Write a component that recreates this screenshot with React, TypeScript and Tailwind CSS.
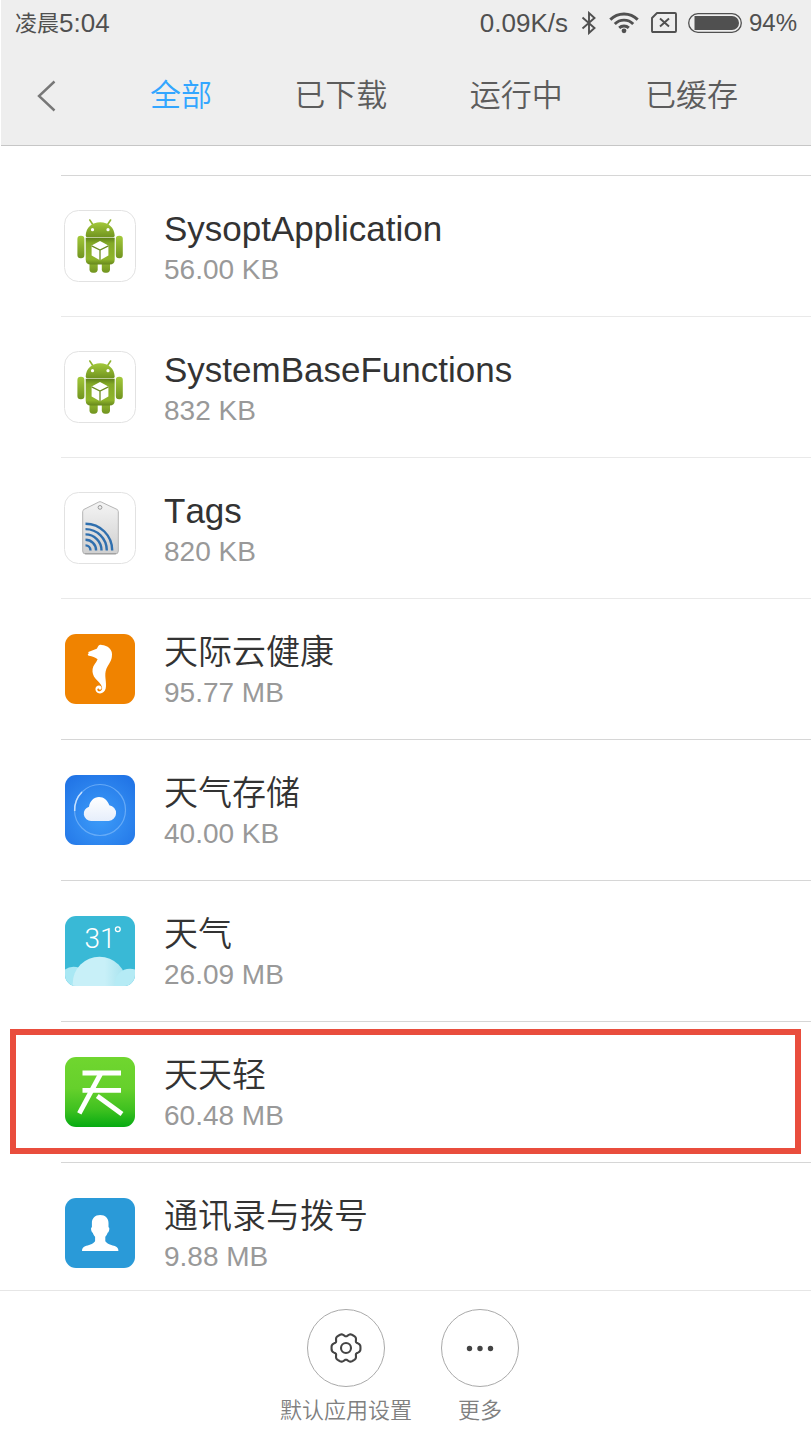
import type { ReactNode } from "react";

const LATIN_CJK = "font-['Liberation_Sans','Noto_Sans_CJK_SC',sans-serif]";

function AndroidIcon() {
  return (
    <svg viewBox="0 0 72 72" className="size-[72px] shrink-0" aria-hidden="true">
      <defs>
        <linearGradient id="droid" x1="0" y1="0" x2="0" y2="1">
          <stop offset="0" stopColor="#a3c93a" />
          <stop offset="1" stopColor="#71941f" />
        </linearGradient>
        <linearGradient id="droidBody" x1="0" y1="0" x2="0" y2="1">
          <stop offset="0" stopColor="#5f8119" />
          <stop offset="0.2" stopColor="#83a926" />
          <stop offset="0.8" stopColor="#8fb52b" />
          <stop offset="1" stopColor="#66871c" />
        </linearGradient>
      </defs>
      <rect x="0.5" y="0.5" width="71" height="71" rx="14" fill="#fff" stroke="#e2e2e2" />
      <path d="M25.8 10l2.8 4.2M46.6 10l-2.8 4.2" stroke="#8fb32e" strokeWidth="1.6" strokeLinecap="round" />
      <rect x="25.5" y="46" width="8.2" height="16.7" rx="3.4" fill="url(#droid)" />
      <rect x="37.800" y="46" width="8.2" height="16.7" rx="3.4" fill="url(#droid)" />
      <rect x="13.4" y="25.7" width="7" height="22.6" rx="3.3" fill="url(#droid)" />
      <rect x="51.800" y="25.7" width="7" height="22.6" rx="3.3" fill="url(#droid)" />
      <path d="M21.7 27.800h29v21.700q0 5-5 5h-19q-5 0-5-5z" fill="url(#droidBody)" />
      <path d="M21.7 25.5C22 17.5 28 12.2 36.2 12.2S50.4 17.5 50.7 25.5q0 1.7-1.6 1.7H23.3q-1.6 0-1.6-1.7z" fill="url(#droid)" />
      <circle cx="28.5" cy="19.7" r="1.6" fill="#fff" />
      <circle cx="44" cy="19.7" r="1.6" fill="#fff" />
      <path d="M36 31l8.4 4.6v10L36 50.2l-8.4-4.6v-10z" fill="#fff" />
      <path d="M27.6 35.8L36 40l8.4-4.2M36 40v10" fill="none" stroke="#6c8c22" strokeWidth="1.3" />
    </svg>
  );
}

function TagIcon() {
  return (
    <svg viewBox="0 0 72 72" className="size-[72px] shrink-0" aria-hidden="true">
      <defs>
        <linearGradient id="tag" x1="0" y1="0" x2="0" y2="1">
          <stop offset="0" stopColor="#f4f4f4" />
          <stop offset="1" stopColor="#cfcfcf" />
        </linearGradient>
      </defs>
      <rect x="0.5" y="0.5" width="71" height="71" rx="14" fill="#fff" stroke="#e2e2e2" />
      <path d="M20 17.4L34.8 10q1.2-.6 2.4 0L53 17.4q1.3.8 1.3 2.2V59q0 3-3 3H21.7q-3 0-3-3V19.6q0-1.4 1.3-2.2z" fill="url(#tag)" stroke="#b4b4b4" />
      <path d="M21 61.6h31" stroke="#a2a2a2" strokeWidth="1.2" />
      <circle cx="36" cy="15.4" r="1.9" fill="#eee" stroke="#999" />
      <g fill="none" stroke="#2f6fae" strokeWidth="2.4">
        <path d="M21.5 31.7A26.7 26.7 0 0 1 48.2 58.4" />
        <path d="M21.5 37.1A21.3 21.3 0 0 1 42.8 58.4" />
        <path d="M21.5 42.4A16 16 0 0 1 37.5 58.4" />
        <path d="M21.5 47.8A10.6 10.6 0 0 1 32.1 58.4" />
        <path d="M21.5 53.4A5 5 0 0 1 26.5 58.4" />
      </g>
    </svg>
  );
}

function SeahorseIcon() {
  return (
    <svg viewBox="0 0 72 72" className="size-[72px] shrink-0" aria-hidden="true">
      <rect x="1" y="1" width="70" height="70" rx="11" fill="#f08300" />
      <path
        d="M24.3 19l8.4-3.2c.9-1.2 1.2-2.6 2-3.4.7-.8 1.8-1 3-.5 5.9.4 10.700 4.400 10.300 9.700-.2 2.300 0 2.600-.6 4.400-.7 3-3.600 6.400-5 9.700-1.300 3.300-1.200 6.300-.9 9.700.4 3.800.8 7.200.2 10.200-.7 3.300-3.200 4.900-5.800 4.800-2.900-.1-4.600-2.300-4.500-4.500.1-2.400 2-3.700 3.700-3.500 1.700.2 2.700 1.500 2.500 2.800-.2 1.200-1.300 1.700-2.200 1.300-.7-.3-.8-.9-.6-1.300-1 .1-1.600.8-1.500 1.600.1 1.100 1.400 1.800 2.700 1.400 1.800-.5 2.500-2.300 2-4.200-.9-3.400-4.300-5.500-6.600-8.500-2.200-2.800-3.300-6-2.800-9.600.5-3.600 3.700-6.300 5-9.600-2.300-1.800-5.400-2.900-8.600-3.500-.9-.2-1.400-.9-1.100-1.500l.7-.6z"
        fill="#fff"
      />
    </svg>
  );
}

function CloudStorageIcon() {
  return (
    <svg viewBox="0 0 72 72" className="size-[72px] shrink-0" aria-hidden="true">
      <defs>
        <radialGradient id="sky" cx="0.5" cy="0.6" r="0.7">
          <stop offset="0" stopColor="#3d9cf9" />
          <stop offset="1" stopColor="#2174e6" />
        </radialGradient>
        <linearGradient id="puff" x1="0" y1="0" x2="0" y2="1">
          <stop offset="0" stopColor="#fff" />
          <stop offset="1" stopColor="#e6eefb" />
        </linearGradient>
      </defs>
      <rect x="1" y="1" width="70" height="70" rx="11" fill="url(#sky)" />
      <circle cx="36" cy="36" r="25.5" fill="none" stroke="#7ab7fa" strokeOpacity="0.75" strokeWidth="1.2" />
      <path d="M10.7 37A25.5 25.5 0 0 1 18 18" fill="none" stroke="#c6e0fd" strokeWidth="1.5" />
      <path d="M27.3 47a7.3 7.300 0 0 1-2.300-14.300C25.800 27 30 23 35 23c4.800 0 8.700 3.300 10.300 8.300A7.900 7.900 0 0 1 44.700 47z" fill="url(#puff)" />
    </svg>
  );
}

function WeatherIcon() {
  return (
    <svg viewBox="0 0 72 72" className="size-[72px] shrink-0" aria-hidden="true">
      <defs>
        <clipPath id="tile">
          <rect x="1" y="1" width="70" height="70" rx="11" />
        </clipPath>
        <linearGradient id="mist" x1="0" y1="0" x2="1" y2="0">
          <stop offset="0.6" stopColor="#c8f0f8" />
          <stop offset="1" stopColor="#a5e2ee" />
        </linearGradient>
      </defs>
      <g clipPath="url(#tile)">
        <rect width="72" height="72" fill="#39b9d6" />
        <circle cx="9.5" cy="66" r="14.3" fill="#a9e8f4" />
        <circle cx="35.5" cy="68.5" r="26.8" fill="url(#mist)" />
        <circle cx="66" cy="69" r="15.3" fill="#b5ebf5" />
      </g>
      <text x="20.5" y="33" fontSize="28" fontWeight="300" fill="#fff" className="font-[Roboto,sans-serif]">31</text>
      <circle cx="53.8" cy="14.3" r="2.4" fill="none" stroke="#fff" strokeWidth="1.3" />
    </svg>
  );
}

function TianIcon() {
  return (
    <svg viewBox="0 0 72 72" className="size-[72px] shrink-0" aria-hidden="true">
      <defs>
        <linearGradient id="leaf" x1="0" y1="0" x2="0" y2="1">
          <stop offset="0" stopColor="#70d62f" />
          <stop offset="0.45" stopColor="#66d02c" />
          <stop offset="0.75" stopColor="#3fc120" />
          <stop offset="1" stopColor="#06ab12" />
        </linearGradient>
      </defs>
      <rect x="1" y="1" width="70" height="70" rx="11" fill="url(#leaf)" />
      <g stroke="#fff" strokeWidth="4.8">
        <line x1="18.5" y1="17" x2="57" y2="17" />
        <line x1="18.5" y1="34.4" x2="57" y2="34.4" />
        <line x1="36.5" y1="18" x2="15.3" y2="57.3" />
        <line x1="33.3" y1="40" x2="58" y2="58" />
      </g>
    </svg>
  );
}

function ContactsIcon() {
  return (
    <svg viewBox="0 0 72 72" className="size-[72px] shrink-0" aria-hidden="true">
      <rect x="1" y="1" width="70" height="70" rx="11" fill="#2a9ad8" />
      <path
        d="M36.2 18c5.2 0 8.3 3.3 8.3 8v4.2c.9.3 1 1.4.7 2.7-.3 1.4-.8 2.500-1.600 2.800-.5 1.800-1.300 3-2.300 4v4.500c2.300 3.300 6.700 3.600 10 5.100 2 .9 3.100 2.200 3.100 4.700H18c0-2.500 1.100-3.800 3.100-4.700 3.300-1.500 7.700-1.800 10-5.100v-4.500c-1-1-1.800-2.200-2.300-4-.8-.3-1.300-1.400-1.600-2.800-.3-1.300-.2-2.400.7-2.700V26c0-4.700 3.100-8 8.300-8z"
        fill="#fff"
      />
    </svg>
  );
}

function GearIcon() {
  const points = Array.from({ length: 120 }, (_, i) => {
    const a = (i * Math.PI) / 60;
    const r = 13.5 + 1.4 * Math.cos(6 * a) - 0.45 * Math.cos(12 * a);
    return `${(18 + r * Math.cos(a)).toFixed(2)},${(18 + r * Math.sin(a)).toFixed(2)}`;
  }).join(" ");
  return (
    <svg viewBox="0 0 36 36" className="size-9" fill="none" stroke="#444" strokeWidth="2.1" aria-hidden="true">
      <polygon points={points} strokeLinejoin="round" />
      <circle cx="18" cy="18" r="5" />
    </svg>
  );
}

function DotsIcon() {
  return (
    <svg viewBox="0 0 36 36" className="size-9" fill="#444" aria-hidden="true">
      <circle cx="7.5" cy="18.5" r="2.7" />
      <circle cx="18" cy="18.5" r="2.7" />
      <circle cx="28.5" cy="18.5" r="2.7" />
    </svg>
  );
}

type App = { name: string; size: string; icon: ReactNode; latin?: boolean; marked?: boolean; faint?: boolean };

const apps: App[] = [
  { name: "SysoptApplication", size: "56.00 KB", icon: <AndroidIcon />, latin: true },
  { name: "SystemBaseFunctions", size: "832 KB", icon: <AndroidIcon />, latin: true, faint: true },
  { name: "Tags", size: "820 KB", icon: <TagIcon />, latin: true, faint: true },
  { name: "天际云健康", size: "95.77 MB", icon: <SeahorseIcon />, faint: true },
  { name: "天气存储", size: "40.00 KB", icon: <CloudStorageIcon /> },
  { name: "天气", size: "26.09 MB", icon: <WeatherIcon /> },
  { name: "天天轻", size: "60.48 MB", icon: <TianIcon />, marked: true },
  { name: "通讯录与拨号", size: "9.88 MB", icon: <ContactsIcon /> },
];

const tabs = ["全部", "已下载", "运行中", "已缓存"];

function StatusBar() {
  return (
    <div className="flex h-[46px] items-center justify-between pr-[14px] pl-[14px] text-[#505050]">
      <div className="flex items-center text-[22px]">
        <span>凌晨</span>
        <span className="text-[26px]">5:04</span>
      </div>
      <div className="flex items-center">
        <span className="mr-[13px] text-[26px]">0.09K/s</span>
        <svg viewBox="0 0 16 24" className="mr-3 h-6 w-4" fill="none" stroke="#505050" strokeWidth="1.9" aria-label="蓝牙">
          <path d="M1.5 6.5l12 10.5-5.5 5V2l5.5 5-12 10.5" />
        </svg>
        <svg viewBox="0 0 30 22" className="mr-3 h-[22px] w-[30px]" fill="none" stroke="#505050" strokeWidth="2.9" aria-label="无线网络">
          <path d="M1.300 7.600a19.500 19.500 0 0 1 27.400 0" />
          <path d="M5.800 11.900a13 13 0 0 1 18.400 0" />
          <path d="M10.200 15.900a7 7 0 0 1 9.600 0" />
          <circle cx="15" cy="18.800" r="2.400" fill="#505050" stroke="none" />
        </svg>
        <svg viewBox="0 0 26 22" className="mr-[11px] h-[22px] w-[26px]" fill="none" stroke="#505050" strokeWidth="1.9" aria-label="无SIM卡">
          <path d="M6 1h18q1 0 1 1v17q0 1-1 1H2q-1 0-1-1V6z" strokeLinejoin="round" />
          <path d="M9 6.500l9 8M18 6.500l-9 8" />
        </svg>
        <svg viewBox="0 0 54 20" className="mr-[7px] h-5 w-[54px]" aria-label="电量">
          <rect x="0.7" y="0.7" width="52.6" height="18.6" rx="9.3" fill="none" stroke="#505050" strokeWidth="1.3" />
          <path d="M6.500 3H44a7 7 0 0 1 0 14H6.500z" fill="#505050" />
        </svg>
        <span className="text-2xl">94%</span>
      </div>
    </div>
  );
}

export default function App() {
  return (
    <div className={`flex min-h-screen flex-col bg-white [font-kerning:none] ${LATIN_CJK}`}>
      <header className="ml-px border-b border-[#c6c6c6] bg-[#eee]">
        <StatusBar />
        <nav className="flex h-[99px] items-center pr-[73px] pl-9">
          <button type="button" aria-label="返回" className="shrink-0">
            <svg viewBox="0 0 20 32" className="h-8 w-5" fill="none" stroke="#777" strokeWidth="2.4" aria-hidden="true">
              <path d="M17.500 1.500L2 16l15.500 14.500" />
            </svg>
          </button>
          <div className="ml-[93px] flex grow justify-between text-[31px] leading-10 font-[350]">
            {tabs.map((tab, i) => (
              <button key={tab} type="button" className={i === 0 ? "text-[#33a6ff]" : "text-[#5c5c5c]"}>
                {tab}
              </button>
            ))}
          </div>
        </nav>
      </header>

      <main className="grow pt-[29px]">
        <ul className="ml-[61px]">
          {apps.map((app) => (
            <li
              key={app.name}
              className={`relative flex gap-7 border-t pl-[3px] last:pb-[13px] ${app.faint ? "border-[#e9e9e9]" : "border-[#d6d6d6]"}`}
            >
              <div className="pt-[34px]">{app.icon}</div>
              <div className="pt-8 not-in-[li:last-child]:pb-[26px]">
                <div className={`leading-[42px] text-[#333] ${app.latin ? "text-[35px]" : "text-[34px] font-[350]"}`}>{app.name}</div>
                <div className="text-[28px] leading-10 text-[#999]">{app.size}</div>
              </div>
              {app.marked && <div className="pointer-events-none absolute top-[7px] right-[10px] bottom-2 -left-[51px] border-6 border-[#e94d3d]" />}
            </li>
          ))}
        </ul>
      </main>

      <footer className="flex justify-center border-t border-[#e6e6e6] pt-[18px] pb-[14px] pl-[15px]">
        {[
          { label: "默认应用设置", icon: <GearIcon /> },
          { label: "更多", icon: <DotsIcon /> },
        ].map((action) => (
          <button key={action.label} type="button" className="flex w-[134px] flex-col items-center gap-2">
            <span className="flex size-[78px] items-center justify-center rounded-full border border-[#aaa]">{action.icon}</span>
            <span className="text-[22px] leading-[31px] font-[350] whitespace-nowrap text-[#808080]">{action.label}</span>
          </button>
        ))}
      </footer>
    </div>
  );
}
